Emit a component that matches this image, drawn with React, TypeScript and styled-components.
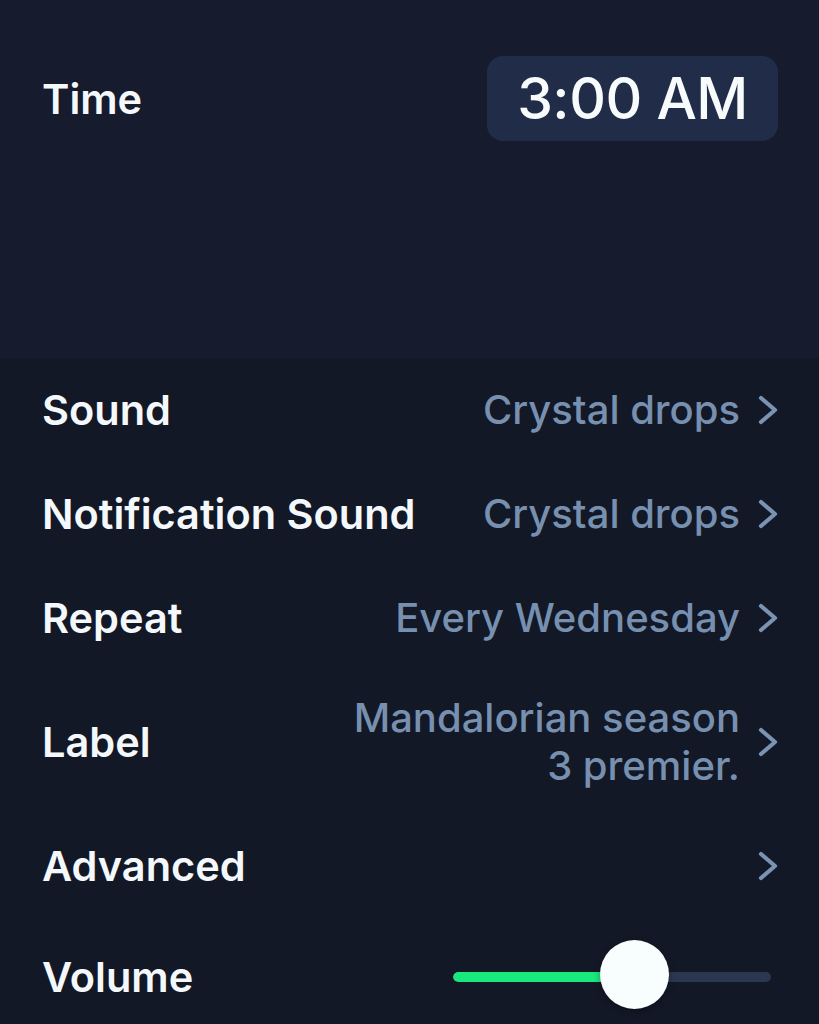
import React, { useState } from 'react';
import styled, { createGlobalStyle } from 'styled-components';

const GlobalStyle = createGlobalStyle`
  html, body {
    margin: 0;
    padding: 0;
    background: #131827;
  }
  body {
    font-family: Inter, "Noto Sans", "Liberation Sans", sans-serif;
    -webkit-font-smoothing: antialiased;
  }
`;

type RowItem = {
    id: string
    title: string
    value?: string
}

const items: Array<RowItem> = [
    { id: 'sound', title: 'Sound', value: 'Crystal drops' },
    { id: 'notif', title: 'Notification Sound', value: 'Crystal drops' },
    { id: 'repeat', title: 'Repeat', value: 'Every Wednesday' },
    { id: 'label', title: 'Label', value: 'Mandalorian season 3 premier.' },
    { id: 'advanced', title: 'Advanced' },
];

const Chevron = () => (
    <ChevronSvg viewBox="0 0 20 30" width="20" height="30">
        <path d="M3 3 L17 15 L3 27" fill="none" stroke="#7b93b3" strokeWidth="4.2" strokeLinecap="round" strokeLinejoin="round" />
    </ChevronSvg>
);

export default function App() {
    const [volume] = useState(0.57);

    return (
        <Screen>
            <GlobalStyle />
            <TimeSection>
                <TimeRow>
                    <Title>Time</Title>
                    <TimePill>3:00 AM</TimePill>
                </TimeRow>
            </TimeSection>

            <List>
                {items.map((item) => (
                    <Row key={item.id}>
                        <Title>{item.title}</Title>
                        <ValueBox>
                            {item.value ? <Value>{item.value}</Value> : null}
                            <Chevron />
                        </ValueBox>
                    </Row>
                ))}
                <Row>
                    <Title>Volume</Title>
                    <Slider>
                        <Track>
                            <Fill style={{ width: `${volume * 100}%` }} />
                        </Track>
                        <Thumb style={{ left: `${volume * 100}%` }} />
                    </Slider>
                </Row>
            </List>
        </Screen>
    );
}

const Screen = styled.div`
  width: 819px;
  min-height: 1024px;
  background: #131827;
  color: #f4f8fb;
  overflow: hidden;
`
const TimeSection = styled.section`
  height: 358px;
  background: #161b2d;
  padding: 56px 41px 0 42px;
  box-sizing: border-box;
`
const TimeRow = styled.div`
  display: flex;
  justify-content: space-between;
  align-items: center;
`
const Title = styled.span`
  font-size: 41.5px;
  font-weight: 600;
  letter-spacing: 0px;
  color: #f4f8fb;
  white-space: nowrap;
`
const TimePill = styled.div`
  width: 291px;
  height: 85px;
  border-radius: 16px;
  background: #212d48;
  display: flex;
  align-items: center;
  justify-content: center;
  font-size: 57px;
  font-weight: 500;
  letter-spacing: -0.5px;
  color: #f7fbfc;
`
const List = styled.div`
  padding: 0 41px 0 42px;
  display: flex;
  flex-direction: column;
`
const Row = styled.div`
  min-height: 104px;
  padding: 24px 0;
  box-sizing: border-box;
  display: flex;
  align-items: center;
  justify-content: space-between;
  gap: 40px;
`
const ValueBox = styled.div`
  display: flex;
  align-items: center;
  gap: 18px;
`
const Value = styled.span`
  max-width: 392px;
  text-align: right;
  font-size: 40px;
  line-height: 48px;
  font-weight: 500;
  color: #7790b0;
`
const ChevronSvg = styled.svg`
  flex: none;
  display: block;
`
const Slider = styled.div`
  position: relative;
  width: 318px;
  height: 70px;
  margin-right: 7px;
  display: flex;
  align-items: center;
`
const Track = styled.div`
  width: 100%;
  height: 10px;
  border-radius: 5px;
  background: #2b3751;
  overflow: hidden;
`
const Fill = styled.div`
  height: 100%;
  background: #19e87c;
  border-radius: 5px;
`
const Thumb = styled.div`
  position: absolute;
  top: -2px;
  width: 69px;
  height: 69px;
  margin-left: -34px;
  border-radius: 50%;
  background: #f8fdfd;
  box-shadow: 0 2px 6px rgba(0, 0, 0, 0.35);
`
